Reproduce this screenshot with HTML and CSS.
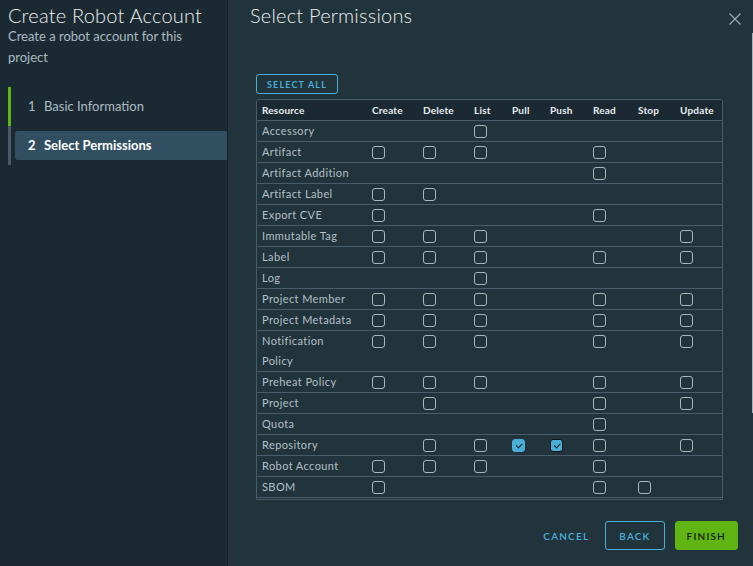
FILE: index.html
```html
<!DOCTYPE html>
<html lang="en">
<head>
  <meta charset="UTF-8" />
  <title>Create Robot Account</title>
  <link rel="stylesheet" href="styles.css">
</head>
<body>
  <div class="wizard">
    <aside class="sidebar">
      <h1 class="wiz-title">Create Robot Account</h1>
      <p class="wiz-sub">Create a robot account for this project</p>
      <ul class="steps">
        <li class="step done"><div class="step-inner"><span class="num">1</span>Basic Information</div></li>
        <li class="step current"><div class="step-inner"><span class="num">2</span>Select Permissions</div></li>
      </ul>
    </aside>

    <main class="main">
      <div class="main-head">
        <h2 class="page-title">Select Permissions</h2>
        <button class="close" aria-label="Close">
          <svg width="12" height="12" viewBox="0 0 12 12"><path d="M0.5 0.5 L11.5 11.5 M11.5 0.5 L0.5 11.5" stroke="#9fadb6" stroke-width="1.1" fill="none"/></svg>
        </button>
      </div>

      <div class="main-body">
        <button class="btn-outline small">Select all</button>
        <div class="datagrid">
          <table class="perm-table">
            <colgroup>
              <col style="width:110px"><col style="width:51px"><col style="width:51px"><col style="width:38px"><col style="width:38px"><col style="width:43px"><col style="width:45px"><col style="width:42px"><col style="width:47px">
            </colgroup>
            <thead>
              <tr><th>Resource</th><th>Create</th><th>Delete</th><th>List</th><th>Pull</th><th>Push</th><th>Read</th><th>Stop</th><th>Update</th></tr>
            </thead>
            <tbody>
              <tr><td>Accessory</td><td></td><td></td><td><span class="cb"></span></td><td></td><td></td><td></td><td></td><td></td></tr>
              <tr><td>Artifact</td><td><span class="cb"></span></td><td><span class="cb"></span></td><td><span class="cb"></span></td><td></td><td></td><td><span class="cb"></span></td><td></td><td></td></tr>
              <tr><td>Artifact Addition</td><td></td><td></td><td></td><td></td><td></td><td><span class="cb"></span></td><td></td><td></td></tr>
              <tr><td>Artifact Label</td><td><span class="cb"></span></td><td><span class="cb"></span></td><td></td><td></td><td></td><td></td><td></td><td></td></tr>
              <tr><td>Export CVE</td><td><span class="cb"></span></td><td></td><td></td><td></td><td></td><td><span class="cb"></span></td><td></td><td></td></tr>
              <tr><td>Immutable Tag</td><td><span class="cb"></span></td><td><span class="cb"></span></td><td><span class="cb"></span></td><td></td><td></td><td></td><td></td><td><span class="cb"></span></td></tr>
              <tr><td>Label</td><td><span class="cb"></span></td><td><span class="cb"></span></td><td><span class="cb"></span></td><td></td><td></td><td><span class="cb"></span></td><td></td><td><span class="cb"></span></td></tr>
              <tr><td>Log</td><td></td><td></td><td><span class="cb"></span></td><td></td><td></td><td></td><td></td><td></td></tr>
              <tr><td>Project Member</td><td><span class="cb"></span></td><td><span class="cb"></span></td><td><span class="cb"></span></td><td></td><td></td><td><span class="cb"></span></td><td></td><td><span class="cb"></span></td></tr>
              <tr><td>Project Metadata</td><td><span class="cb"></span></td><td><span class="cb"></span></td><td><span class="cb"></span></td><td></td><td></td><td><span class="cb"></span></td><td></td><td><span class="cb"></span></td></tr>
              <tr><td>Notification Policy</td><td><span class="cb"></span></td><td><span class="cb"></span></td><td><span class="cb"></span></td><td></td><td></td><td><span class="cb"></span></td><td></td><td><span class="cb"></span></td></tr>
              <tr><td>Preheat Policy</td><td><span class="cb"></span></td><td><span class="cb"></span></td><td><span class="cb"></span></td><td></td><td></td><td><span class="cb"></span></td><td></td><td><span class="cb"></span></td></tr>
              <tr><td>Project</td><td></td><td><span class="cb"></span></td><td></td><td></td><td></td><td><span class="cb"></span></td><td></td><td><span class="cb"></span></td></tr>
              <tr><td>Quota</td><td></td><td></td><td></td><td></td><td></td><td><span class="cb"></span></td><td></td><td></td></tr>
              <tr><td>Repository</td><td></td><td><span class="cb"></span></td><td><span class="cb"></span></td><td><span class="cb checked"></span></td><td><span class="cb checked focused"></span></td><td><span class="cb"></span></td><td></td><td><span class="cb"></span></td></tr>
              <tr><td>Robot Account</td><td><span class="cb"></span></td><td><span class="cb"></span></td><td><span class="cb"></span></td><td></td><td></td><td><span class="cb"></span></td><td></td><td></td></tr>
              <tr><td>SBOM</td><td><span class="cb"></span></td><td></td><td></td><td></td><td></td><td><span class="cb"></span></td><td><span class="cb"></span></td><td></td></tr>
            </tbody>
          </table>
        </div>
      </div>

      <div class="main-foot">
        <button class="btn-flat">Cancel</button>
        <button class="btn-outline">Back</button>
        <button class="btn-success">Finish</button>
      </div>

      <div class="scroll-thumb"></div>
    </main>
  </div>
</body>
</html>
```

FILE: styles.css
```css
body, html {
  margin: 0;
  padding: 0;
  font-family: Lato, "Open Sans", sans-serif;
  overflow: hidden;
}
.wizard {
  display: flex;
  width: 753px;
  height: 566px;
  background: #21333b;
}

/* left column */
.sidebar {
  width: 227px;
  flex-shrink: 0;
  background: #1b2a32;
  border-right: 1px solid #15222a;
}
.wiz-title {
  margin: 4px 0 0 8px;
  font-size: 20px;
  line-height: 22px;
  font-weight: 300;
  letter-spacing: 0.2px;
  color: #eaeef0;
}
.wiz-sub {
  margin: 0 20px 0 8px;
  font-size: 13px;
  line-height: 21px;
  color: #acbac3;
}
.steps {
  list-style: none;
  margin: 19px 0 0 8px;
  padding: 0;
}
.step {
  border-left: 3px solid #4c5a63;
  padding: 5px 0 5px 4px;
}
.step.done { border-left-color: #60b515; }
.step-inner {
  height: 29px;
  line-height: 29px;
  padding-left: 13px;
  font-size: 13px;
  color: #acbac3;
  border-radius: 3px 0 0 3px;
}
.num {
  display: inline-block;
  width: 16px;
}
.step.current .step-inner {
  background: #324f62;
  color: #ffffff;
  font-weight: 700;
}

/* right column */
.main {
  position: relative;
  flex: 1;
  display: flex;
  flex-direction: column;
}
.main-head {
  display: flex;
  justify-content: space-between;
  align-items: flex-start;
  height: 36px;
  padding: 0 12px 0 22px;
}
.page-title {
  margin: 4px 0 0;
  font-size: 20px;
  line-height: 22px;
  font-weight: 300;
  letter-spacing: 0.2px;
  color: #eaeef0;
}
.close {
  margin-top: 13px;
  padding: 0;
  border: none;
  background: none;
  width: 12px;
  height: 12px;
}
.close svg { display: block; }

.main-body {
  padding: 38px 30px 0 28px;
}
.datagrid {
  margin-top: 5px;
  width: 467px;
  height: 401px;
  overflow: hidden;
  box-sizing: border-box;
  border: 1px solid #485d69;
  border-radius: 3px 3px 0 0;
}
.perm-table {
  width: 465px;
  border-collapse: collapse;
  table-layout: fixed;
}
.perm-table th {
  background: #1b2a32;
  color: #e9edf0;
  font-size: 10px;
  font-weight: 700;
  letter-spacing: 0.2px;
  text-align: left;
  line-height: 20px;
  padding: 0 0 0 5px;
  border-bottom: 1px solid #485d69;
  white-space: nowrap;
}
.perm-table td {
  color: #b3c0c8;
  font-size: 11px;
  letter-spacing: 0.4px;
  line-height: 20px;
  padding: 0 0 0 5px;
  vertical-align: top;
  border-bottom: 1px solid #485d69;
}
.perm-table td:first-child {
  padding-right: 13px;
}
.cb {
  display: block;
  width: 13px;
  height: 13px;
  margin-top: 4px;
  box-sizing: border-box;
  border: 1px solid #a9b6be;
  border-radius: 3px;
  position: relative;
}
.cb.checked {
  background: #49afd9;
  border-color: #49afd9;
}
.cb.checked.focused { border-color: #0c1418; }
.cb.checked::after {
  content: "";
  position: absolute;
  left: 3px;
  top: 2.5px;
  width: 5px;
  height: 2.5px;
  border-left: 1.3px solid #17242b;
  border-bottom: 1.3px solid #17242b;
  transform: rotate(-45deg);
}

/* buttons */
button {
  font-family: inherit;
  cursor: pointer;
}
.btn-outline, .btn-flat, .btn-success {
  display: block;
  height: 29px;
  padding: 0 11px;
  font-size: 10px;
  font-weight: 600;
  letter-spacing: 0.12em;
  text-transform: uppercase;
  border-radius: 3px;
  box-sizing: border-box;
}
.btn-outline {
  background: transparent;
  border: 1px solid #49afd9;
  color: #49afd9;
  padding: 0 13px;
}
.btn-outline.small {
  width: 82px;
  height: 20px;
  padding: 0;
  font-size: 9px;
  font-weight: 700;
  letter-spacing: 0.13em;
}
.btn-flat {
  background: transparent;
  border: none;
  color: #49afd9;
  padding: 0 6px 0 12px;
}
.btn-success {
  background: #60b515;
  border: 1px solid #60b515;
  color: #10200a;
}
.main-foot {
  display: flex;
  justify-content: flex-end;
  gap: 10px;
  margin-top: 21px;
  padding-right: 15px;
}

.scroll-thumb {
  position: absolute;
  right: 0;
  top: 33px;
  width: 1px;
  height: 380px;
  background: #a3b1b9;
}
```
